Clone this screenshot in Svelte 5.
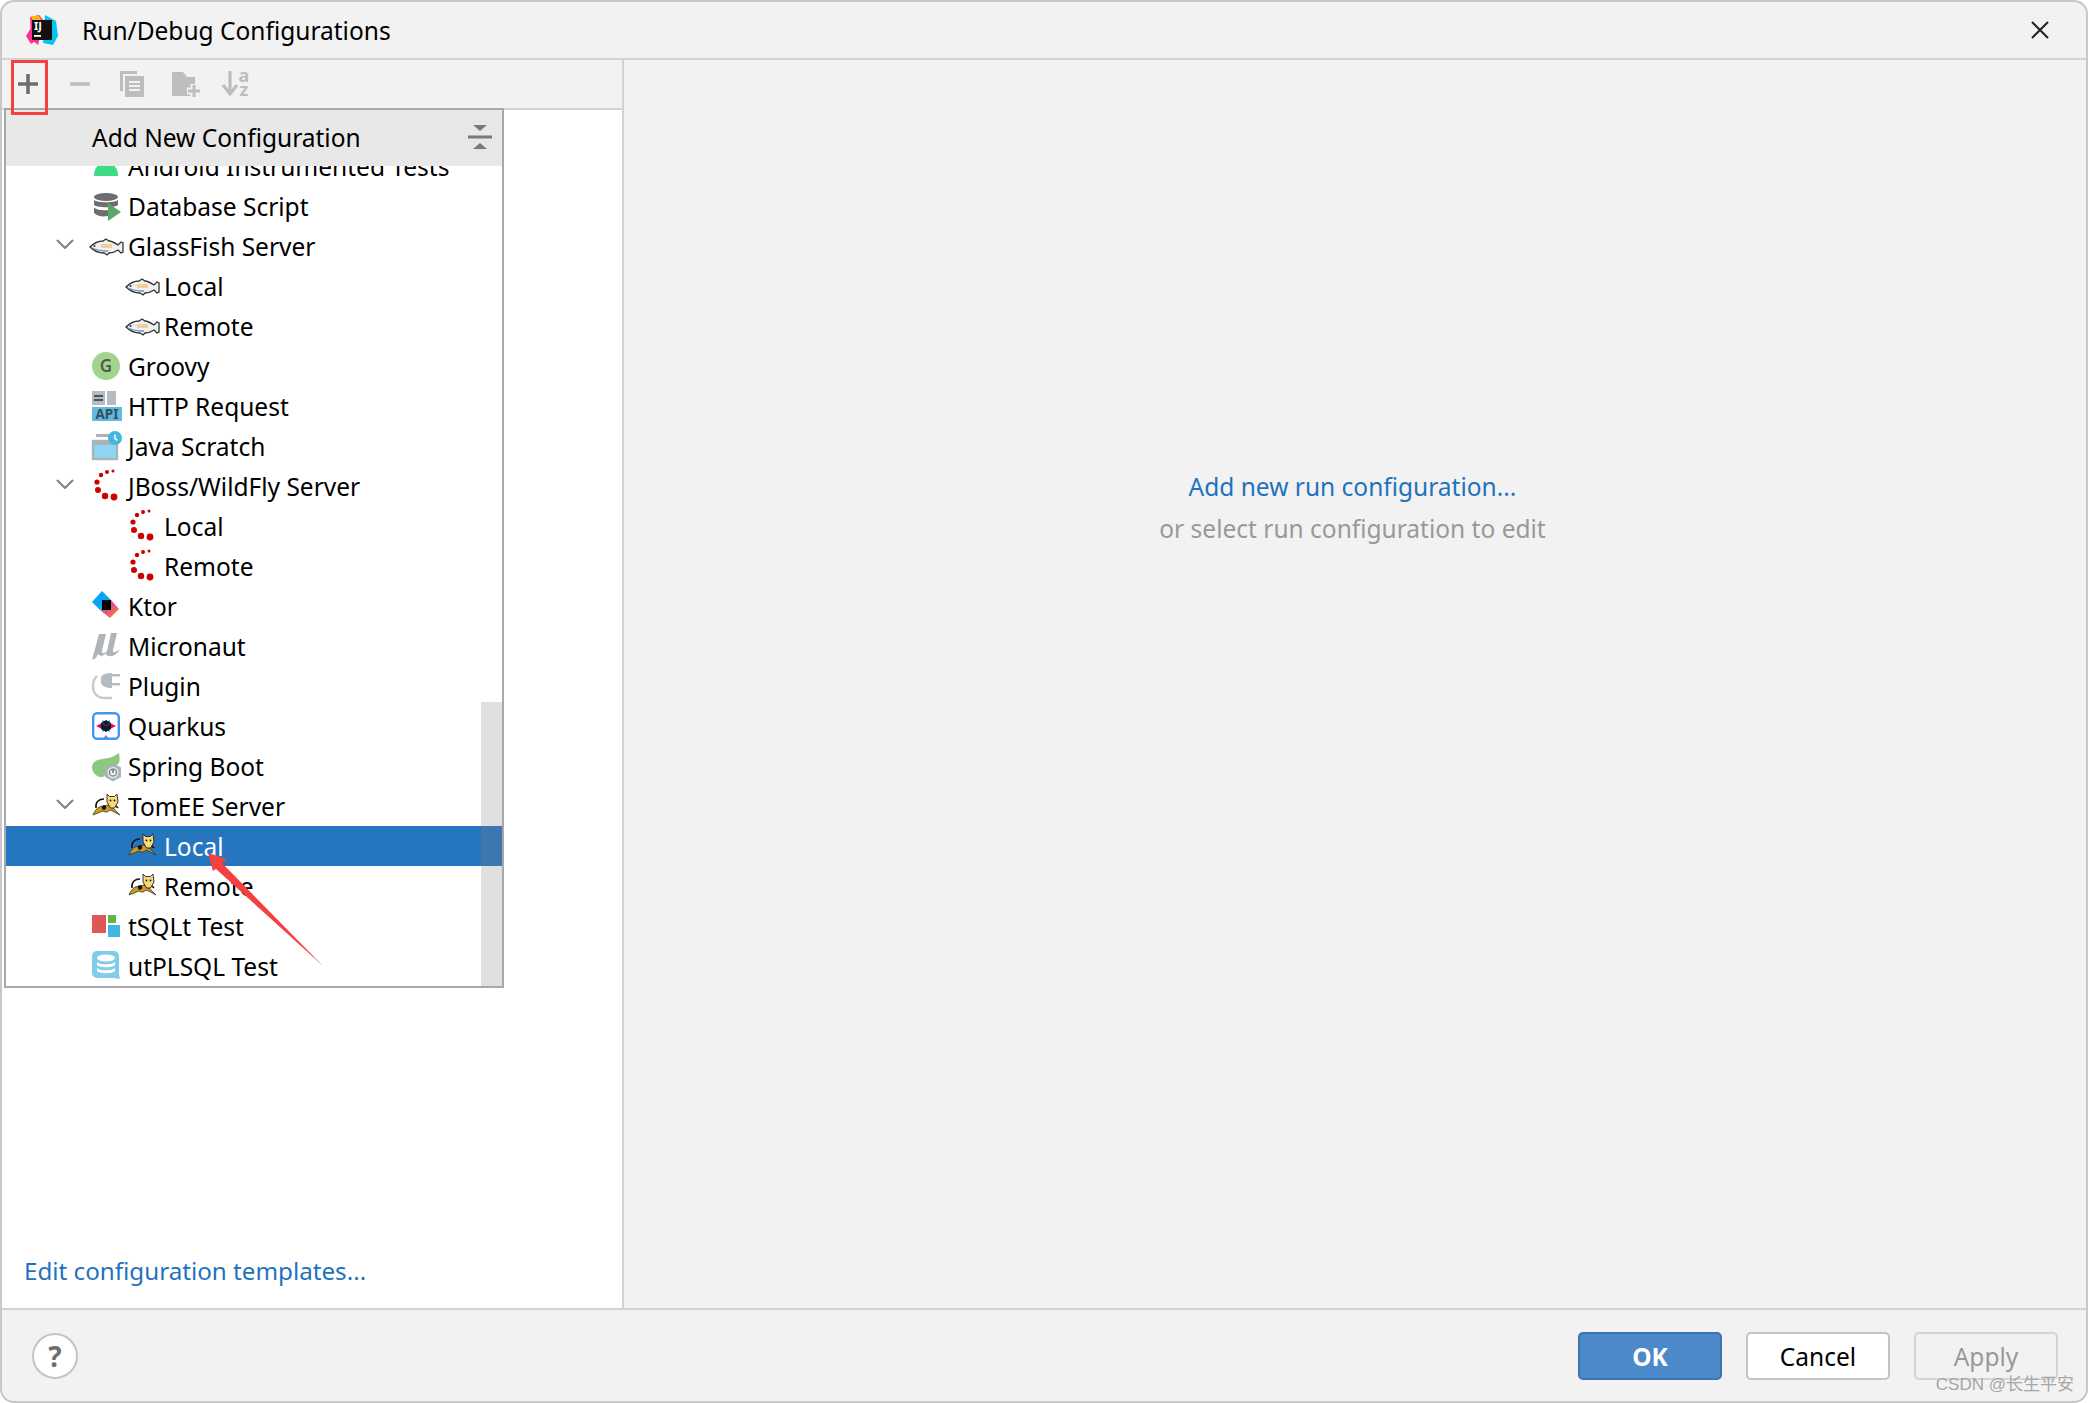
<script>
  const rows = [
    { label: 'Android Instrumented Tests', icon: 'android', level: 1 },
    { label: 'Database Script', icon: 'db', level: 1 },
    { label: 'GlassFish Server', icon: 'fish', level: 1, open: true },
    { label: 'Local', icon: 'fish', level: 2 },
    { label: 'Remote', icon: 'fish', level: 2 },
    { label: 'Groovy', icon: 'groovy', level: 1 },
    { label: 'HTTP Request', icon: 'http', level: 1 },
    { label: 'Java Scratch', icon: 'scratch', level: 1 },
    { label: 'JBoss/WildFly Server', icon: 'jboss', level: 1, open: true },
    { label: 'Local', icon: 'jboss', level: 2 },
    { label: 'Remote', icon: 'jboss', level: 2 },
    { label: 'Ktor', icon: 'ktor', level: 1 },
    { label: 'Micronaut', icon: 'micronaut', level: 1 },
    { label: 'Plugin', icon: 'plugin', level: 1 },
    { label: 'Quarkus', icon: 'quarkus', level: 1 },
    { label: 'Spring Boot', icon: 'spring', level: 1 },
    { label: 'TomEE Server', icon: 'tomee', level: 1, open: true },
    { label: 'Local', icon: 'tomee', level: 2, selected: true },
    { label: 'Remote', icon: 'tomee', level: 2 },
    { label: 'tSQLt Test', icon: 'tsqlt', level: 1 },
    { label: 'utPLSQL Test', icon: 'utplsql', level: 1 }
  ];
</script>

{#snippet icon(name)}
  <svg class="ic" viewBox="0 0 28 28" width="28" height="28">
    {#if name === 'android'}
      <path d="M2 24C2 18 4 12 14 10C24 12 26 18 26 24z" fill="#3ddc84" />
    {:else if name === 'db'}
      <ellipse cx="14" cy="5" rx="12" ry="4" fill="#6e6e6e" />
      <path d="M2 8c3 3 21 3 24 0v5c-3 3-21 3-24 0zM2 15.500c3 3 11 3 14 2.500v6c-6 1-11 0-14-3z" fill="#6e6e6e" />
      <path d="M16 11l13 9-13 9z" fill="#59a869" />
    {:else if name === 'fish'}
      <path d="M-2 15c4-4 8-6 13-6l3-2 3 2c3 0 6 2 9 4l3-3 2 1v9l-2 1-3-3c-3 2-6 3-9 3l-2 2-3-2c-6 0-10-2-14-6z" fill="#eef0f2" stroke="#333" stroke-width="1.300" />
      <circle cx="2.500" cy="14" r="1" fill="#333" />
      <path d="M9 12h11v4H9z" fill="#f4c98a" opacity=".85" />
      <path d="M0 16c4 2 9 3 16 3" stroke="#6d8fc0" stroke-width="1.300" fill="none" />
    {:else if name === 'groovy'}
      <circle cx="14" cy="14" r="14" fill="#a3d48f" />
      <text x="14" y="20" text-anchor="middle" class="svgt" font-size="17" font-weight="600" fill="#4f5b4a">G</text>
    {:else if name === 'http'}
      <rect x="0" y="-1" width="13" height="14" fill="#b4bcc2" />
      <rect x="15" y="-1" width="9" height="14" fill="#b4bcc2" />
      <rect x="2" y="3" width="9" height="2" fill="#4d5459" /><rect x="2" y="7" width="9" height="2" fill="#4d5459" />
      <rect x="0" y="15" width="30" height="14" fill="#62b8de" />
      <text x="15" y="27" text-anchor="middle" class="svgt" font-size="13.500" font-weight="700" fill="#33505e">API</text>
    {:else if name === 'scratch'}
      <rect x="4" y="2" width="18" height="3" fill="#aab3b9" />
      <rect x="1" y="9" width="24" height="18" fill="#8dd5f0" stroke="#aab3b9" stroke-width="2.400" />
      <rect x="1" y="9" width="24" height="4" fill="#aab3b9" />
      <circle cx="23" cy="6" r="7" fill="#40b6e0" />
      <path d="M23 2.500v4l2.500 1.800" stroke="#fff" stroke-width="1.500" fill="none" />
    {:else if name === 'jboss'}
      <g fill="#cc0000">
        <circle cx="21" cy="-1" r="1.500" /><circle cx="15" cy="0" r="2" /><circle cx="9" cy="3" r="2.200" />
        <circle cx="5" cy="10" r="2.600" /><circle cx="6" cy="18" r="3" /><circle cx="13" cy="24" r="3.200" /><circle cx="22" cy="25" r="3.400" />
      </g>
    {:else if name === 'ktor'}
      <defs><linearGradient id="kt" x1="0" y1="0" x2="1" y2="1"><stop offset="0" stop-color="#7b5fd0" /><stop offset=".5" stop-color="#e5537e" /><stop offset="1" stop-color="#f98d1c" /></linearGradient></defs>
      <path d="M0 10L10-1l9 9L8 18z" fill="#08a5f4" />
      <path d="M8 18L19 8l8 9-9 9z" fill="url(#kt)" />
      <path d="M10 8h9v10h-9z" fill="#000" />
    {:else if name === 'micronaut'}
      <path d="M0 28L7 2H14L10 18C9 22 12 22 15 19L19 1H25L21 18C20 21 23 21 28 17C25 22 21 25 17 24C15 24 14 23 14 21C12 24 8 25 6 22L4 26z" fill="#adb5bb" />
    {:else if name === 'plugin'}
      <path d="M5 4C2 7 1 10 1 14C1 22 6 26 12 26H20" fill="none" stroke="#c4cbd0" stroke-width="2.400" />
      <path d="M9 5c2-3 5-4 11-4v15c-6 0-10-2-11-5z" fill="#b4bcc2" />
      <rect x="20" y="2" width="8" height="2.400" fill="#b4bcc2" /><rect x="20" y="11" width="8" height="2.400" fill="#b4bcc2" />
    {:else if name === 'quarkus'}
      <rect x="1.200" y="1.200" width="25.600" height="25.600" rx="4" fill="#fff" stroke="#4695eb" stroke-width="2.400" />
      <path d="M10 28l4-5 4 5z" fill="#4695eb" />
      <path d="M10 8l4 2 4-2-1 6 1 6-4-2-4 2 1-6z" fill="#4695eb" />
      <path d="M4 14l8-4v8zM24 14l-8-4v8z" fill="#ff004a" />
      <path d="M14 8l5 3v6l-5 3-5-3v-6z" fill="#0d1c2c" />
      <path d="M9.500 11l4.500 2.500 4.500-2.500" stroke="#45525e" stroke-width="1" fill="none" />
    {:else if name === 'spring'}
      <path d="M0 15C1 7 10 7 17 6c4-1 6-3 10-5 1 5 1 9-1 11L11 25C5 26 0 21 0 15z" fill="#8cc97f" />
      <path d="M21 11l8 4.500v9.500L21 29.500 13 25v-9.500z" fill="#aab3b9" />
      <circle cx="21" cy="20.500" r="5.500" fill="#f2f2f2" />
      <path d="M21 17v4" stroke="#7f8b91" stroke-width="1.800" /><circle cx="21" cy="20.500" r="3.600" fill="none" stroke="#7f8b91" stroke-width="1.500" />
    {:else if name === 'tomee'}
      <path d="M1 23C3 18 6 15 9 14.500L16 13l4 2 8 8c-4-2-7-4-10-5-2 2-4 3-7 1-3 1-7 3-10 4z" fill="#cf9a20" stroke="#222" stroke-width=".7" />
      <path d="M15 2l2.500 2.500h5L25 2l1 8-3.500 6h-4L15 10z" fill="#f6da7a" stroke="#222" stroke-width=".9" />
      <path d="M4 16C3 10 7 7 12 7" fill="none" stroke="#111" stroke-width="1.500" />
      <circle cx="12" cy="15.500" r="2.200" fill="#111" /><circle cx="18.500" cy="8.500" r=".9" fill="#111" /><circle cx="22.500" cy="8.500" r=".9" fill="#111" />
      <path d="M24 14l2 2" stroke="#111" stroke-width="1.600" />
    {:else if name === 'tsqlt'}
      <rect x="0" y="3" width="14" height="18" fill="#e05555" />
      <rect x="16" y="3" width="8" height="8" fill="#62b543" />
      <rect x="16" y="13" width="12" height="12" fill="#40b6e0" />
    {:else if name === 'utplsql'}
      <path d="M5-1h17a5 5 0 0 1 5 5v18l1 5-6-1H5a5 5 0 0 1-5-5V4a5 5 0 0 1 5-5z" fill="#7fcde9" />
      <ellipse cx="14" cy="6" rx="9" ry="3.400" fill="#fff" />
      <path d="M5 10c2 3 16 3 18 0v3c-2 3-16 3-18 0zM5 16c2 3 16 3 18 0v3c-2 3-16 3-18 0z" fill="#fff" />
    {/if}
  </svg>
{/snippet}

<div class="window">
  <header class="titlebar">
    <svg class="logo" viewBox="0 0 32 32" width="32" height="32">
      <path d="M4 3l9-2 5 6-6 24-7-6z" fill="#ff318c" />
      <path d="M5 2h8l3 6H7z" fill="#fdb60d" />
      <path d="M19 1l11 6 2 15-5 9-10-2z" fill="#07c3f2" />
      <path d="M0 22l5-8 6 12-6 4z" fill="#ff318c" />
      <rect x="6" y="6" width="20" height="20" fill="#111" />
      <text x="8" y="16" class="svgt" font-size="11" font-weight="700" fill="#fff">IJ</text>
      <rect x="8" y="21" width="7" height="1.800" fill="#fff" />
    </svg>
    <span class="title">Run/Debug Configurations</span>
    <svg class="close" viewBox="0 0 18 18" width="18" height="18">
      <path d="M1 1l16 16M17 1L1 17" stroke="#222" stroke-width="2" />
    </svg>
  </header>

  <div class="main">
    <aside class="side">
      <div class="toolbar">
        <svg class="tool" viewBox="0 0 24 24" width="24" height="24"><path d="M12 2v20M2 12h20" stroke="#6e6e6e" stroke-width="3.600" /></svg>
        <svg class="tool" viewBox="0 0 24 24" width="24" height="24"><path d="M2 12h20" stroke="#bdbdbd" stroke-width="3.400" /></svg>
        <svg class="tool" viewBox="0 0 24 26" width="24" height="26">
          <path d="M0 0h17v3H3v17H0z" fill="#bdbdbd" />
          <path d="M5 5h19v21H5z" fill="#bdbdbd" />
          <path d="M9 11h11M9 15h11M9 19h11" stroke="#f2f2f2" stroke-width="2" />
        </svg>
        <svg class="tool folder" viewBox="0 0 28 28" width="28" height="28">
          <path d="M0 2h11l4 5h8v19H0z" fill="#bdbdbd" />
          <path d="M22 14v14M15 21h13" stroke="#f2f2f2" stroke-width="7" />
          <path d="M22 15v12M16 21h12" stroke="#bdbdbd" stroke-width="3" />
        </svg>
        <svg class="tool" viewBox="0 0 28 28" width="28" height="28">
          <path d="M8 1v21M1 15l7 9 7-9" fill="none" stroke="#bdbdbd" stroke-width="3.200" />
          <text x="22" y="12" class="svgt" text-anchor="middle" font-size="18" font-weight="700" fill="#bdbdbd">a</text>
          <text x="22" y="26" class="svgt" text-anchor="middle" font-size="18" font-weight="700" fill="#bdbdbd">z</text>
        </svg>
      </div>
      <div class="side-body">
        <a class="link edit">Edit configuration templates...</a>
      </div>
    </aside>
    <section class="detail">
      <a class="link">Add new run configuration...</a>
      <span class="hint">or select run configuration to edit</span>
    </section>
  </div>

  <footer class="footer">
    <button class="help">?</button>
    <div class="actions">
      <button class="btn ok">OK</button>
      <button class="btn">Cancel</button>
      <button class="btn off">Apply</button>
    </div>
  </footer>

  <div class="popup">
    <div class="pop-head">
      <span>Add New Configuration</span>
      <svg viewBox="0 0 24 24" width="24" height="24">
        <path d="M5 0h14l-7 6zM12 18l7 6H5zM0 10.500h24v3H0z" fill="#7a7a7a" />
      </svg>
    </div>
    <div class="list">
      <div class="track"></div>
      {#each rows as row}
        <div class="row" class:l2={row.level === 2} class:selected={row.selected}>
          {#if row.open}
            <svg class="chev" viewBox="0 0 18 10" width="18" height="10"><path d="M1 1l8 8 8-8" fill="none" stroke="#7f7f7f" stroke-width="2" /></svg>
          {/if}
          {@render icon(row.icon)}
          <span>{row.label}</span>
        </div>
      {/each}
    </div>
  </div>

  <div class="mark"></div>
  <svg class="arrow" viewBox="0 0 130 130" width="130" height="130">
    <path d="M8 3l19 6-5 4 101 103L16 19l-3 2z" fill="#f44040" />
  </svg>
  <span class="watermark">CSDN @长生平安</span>
</div>

<style>
  :global(body) { margin: 0; background: #fff; }
  .window {
    position: relative;
    box-sizing: border-box;
    width: 2088px;
    height: 1403px;
    border: 2px solid #c8c8c8;
    border-radius: 14px;
    background: #f2f2f2;
    display: flex;
    flex-direction: column;
    overflow: hidden;
    font-family: "Noto Sans", "Noto Sans CJK SC", sans-serif;
    font-size: 24.5px;
    color: #000;
  }
  .titlebar {
    height: 56px;
    flex: none;
    display: flex;
    align-items: center;
    padding: 0 37px 0 24px;
    border-bottom: 2px solid #d2d2d2;
  }
  .logo { margin-right: 24px; }
  .title { flex: 1; }
  .main { flex: 1; display: flex; min-height: 0; }
  .side {
    width: 620px;
    flex: none;
    display: flex;
    flex-direction: column;
    border-right: 2px solid #d2d2d2;
  }
  .toolbar {
    height: 50px;
    flex: none;
    box-sizing: border-box;
    display: flex;
    align-items: center;
    gap: 28px;
    padding-left: 14px;
    border-bottom: 2px solid #d2d2d2;
  }
  .tool { overflow: visible; }
  .folder { margin-right: -6px; }
  .side-body {
    flex: 1;
    background: #fff;
    display: flex;
    align-items: flex-end;
    padding: 0 0 21px 22px;
  }
  .link { color: #1f72bd; }
  .edit { font-size: 24.2px; }
  .detail {
    flex: 1;
    display: flex;
    flex-direction: column;
    align-items: center;
    padding: 410px 5px 0 0;
    gap: 9px;
  }
  .hint { color: #999; }
  .footer {
    height: 93px;
    flex: none;
    box-sizing: border-box;
    border-top: 2px solid #d2d2d2;
    display: flex;
    align-items: center;
    justify-content: space-between;
    padding: 0 28px 0 30px;
  }
  .help {
    width: 46px;
    height: 46px;
    border-radius: 50%;
    border: 2px solid #c4c4c4;
    background: #fff;
    color: #6e6e6e;
    font: 700 28px "Noto Sans", sans-serif;
    padding: 0;
  }
  .actions { display: flex; gap: 24px; }
  .btn {
    width: 144px;
    height: 48px;
    box-sizing: border-box;
    border: 2px solid #c4c4c4;
    border-radius: 5px;
    background: #fff;
    font: 24.5px "Noto Sans", sans-serif;
    color: #000;
    padding: 2px 0 0;
  }
  .ok { background: #4c89c9; border-color: #3d74b0; color: #fff; font-weight: 700; }
  .off { background: #f2f2f2; border-color: #d4d4d4; color: #999; }
  .popup {
    position: absolute;
    left: 2px;
    top: 106px;
    width: 500px;
    height: 880px;
    box-sizing: border-box;
    border: 2px solid #a8a8a8;
    background: #fff;
    display: flex;
    flex-direction: column;
  }
  .pop-head {
    height: 56px;
    box-sizing: border-box;
    flex: none;
    background: #e8e8e8;
    display: flex;
    align-items: center;
    justify-content: space-between;
    padding: 0 10px 2px 86px;
  }
  .list { position: relative; flex: 1; min-height: 0; overflow: hidden; }
  .track {
    position: absolute;
    right: 0;
    top: 536px;
    bottom: 0;
    width: 21px;
    background: rgba(128, 128, 128, .25);
    z-index: 1;
  }
  .row {
    position: relative;
    height: 40px;
    display: flex;
    align-items: center;
    gap: 8px;
    padding-left: 86px;
  }
  .track + .row { margin-top: -20px; }
  .l2 { padding-left: 122px; }
  .selected { background: #2675bf; color: #fff; }
  .chev { position: absolute; left: 50px; top: 13px; }
  .ic { flex: none; overflow: visible; }
  .svgt { font-family: "Noto Sans", sans-serif; }
  .mark {
    position: absolute;
    left: 9px;
    top: 58px;
    width: 37px;
    height: 55px;
    box-sizing: border-box;
    border: 3px solid #f44040;
  }
  .arrow { position: absolute; left: 198px; top: 848px; }
  .watermark {
    position: absolute;
    right: 12px;
    bottom: 6px;
    font-family: "Liberation Sans", "Noto Sans CJK SC", sans-serif;
    font-size: 17px;
    line-height: 20px;
    color: #a6a6a6;
  }
</style>
